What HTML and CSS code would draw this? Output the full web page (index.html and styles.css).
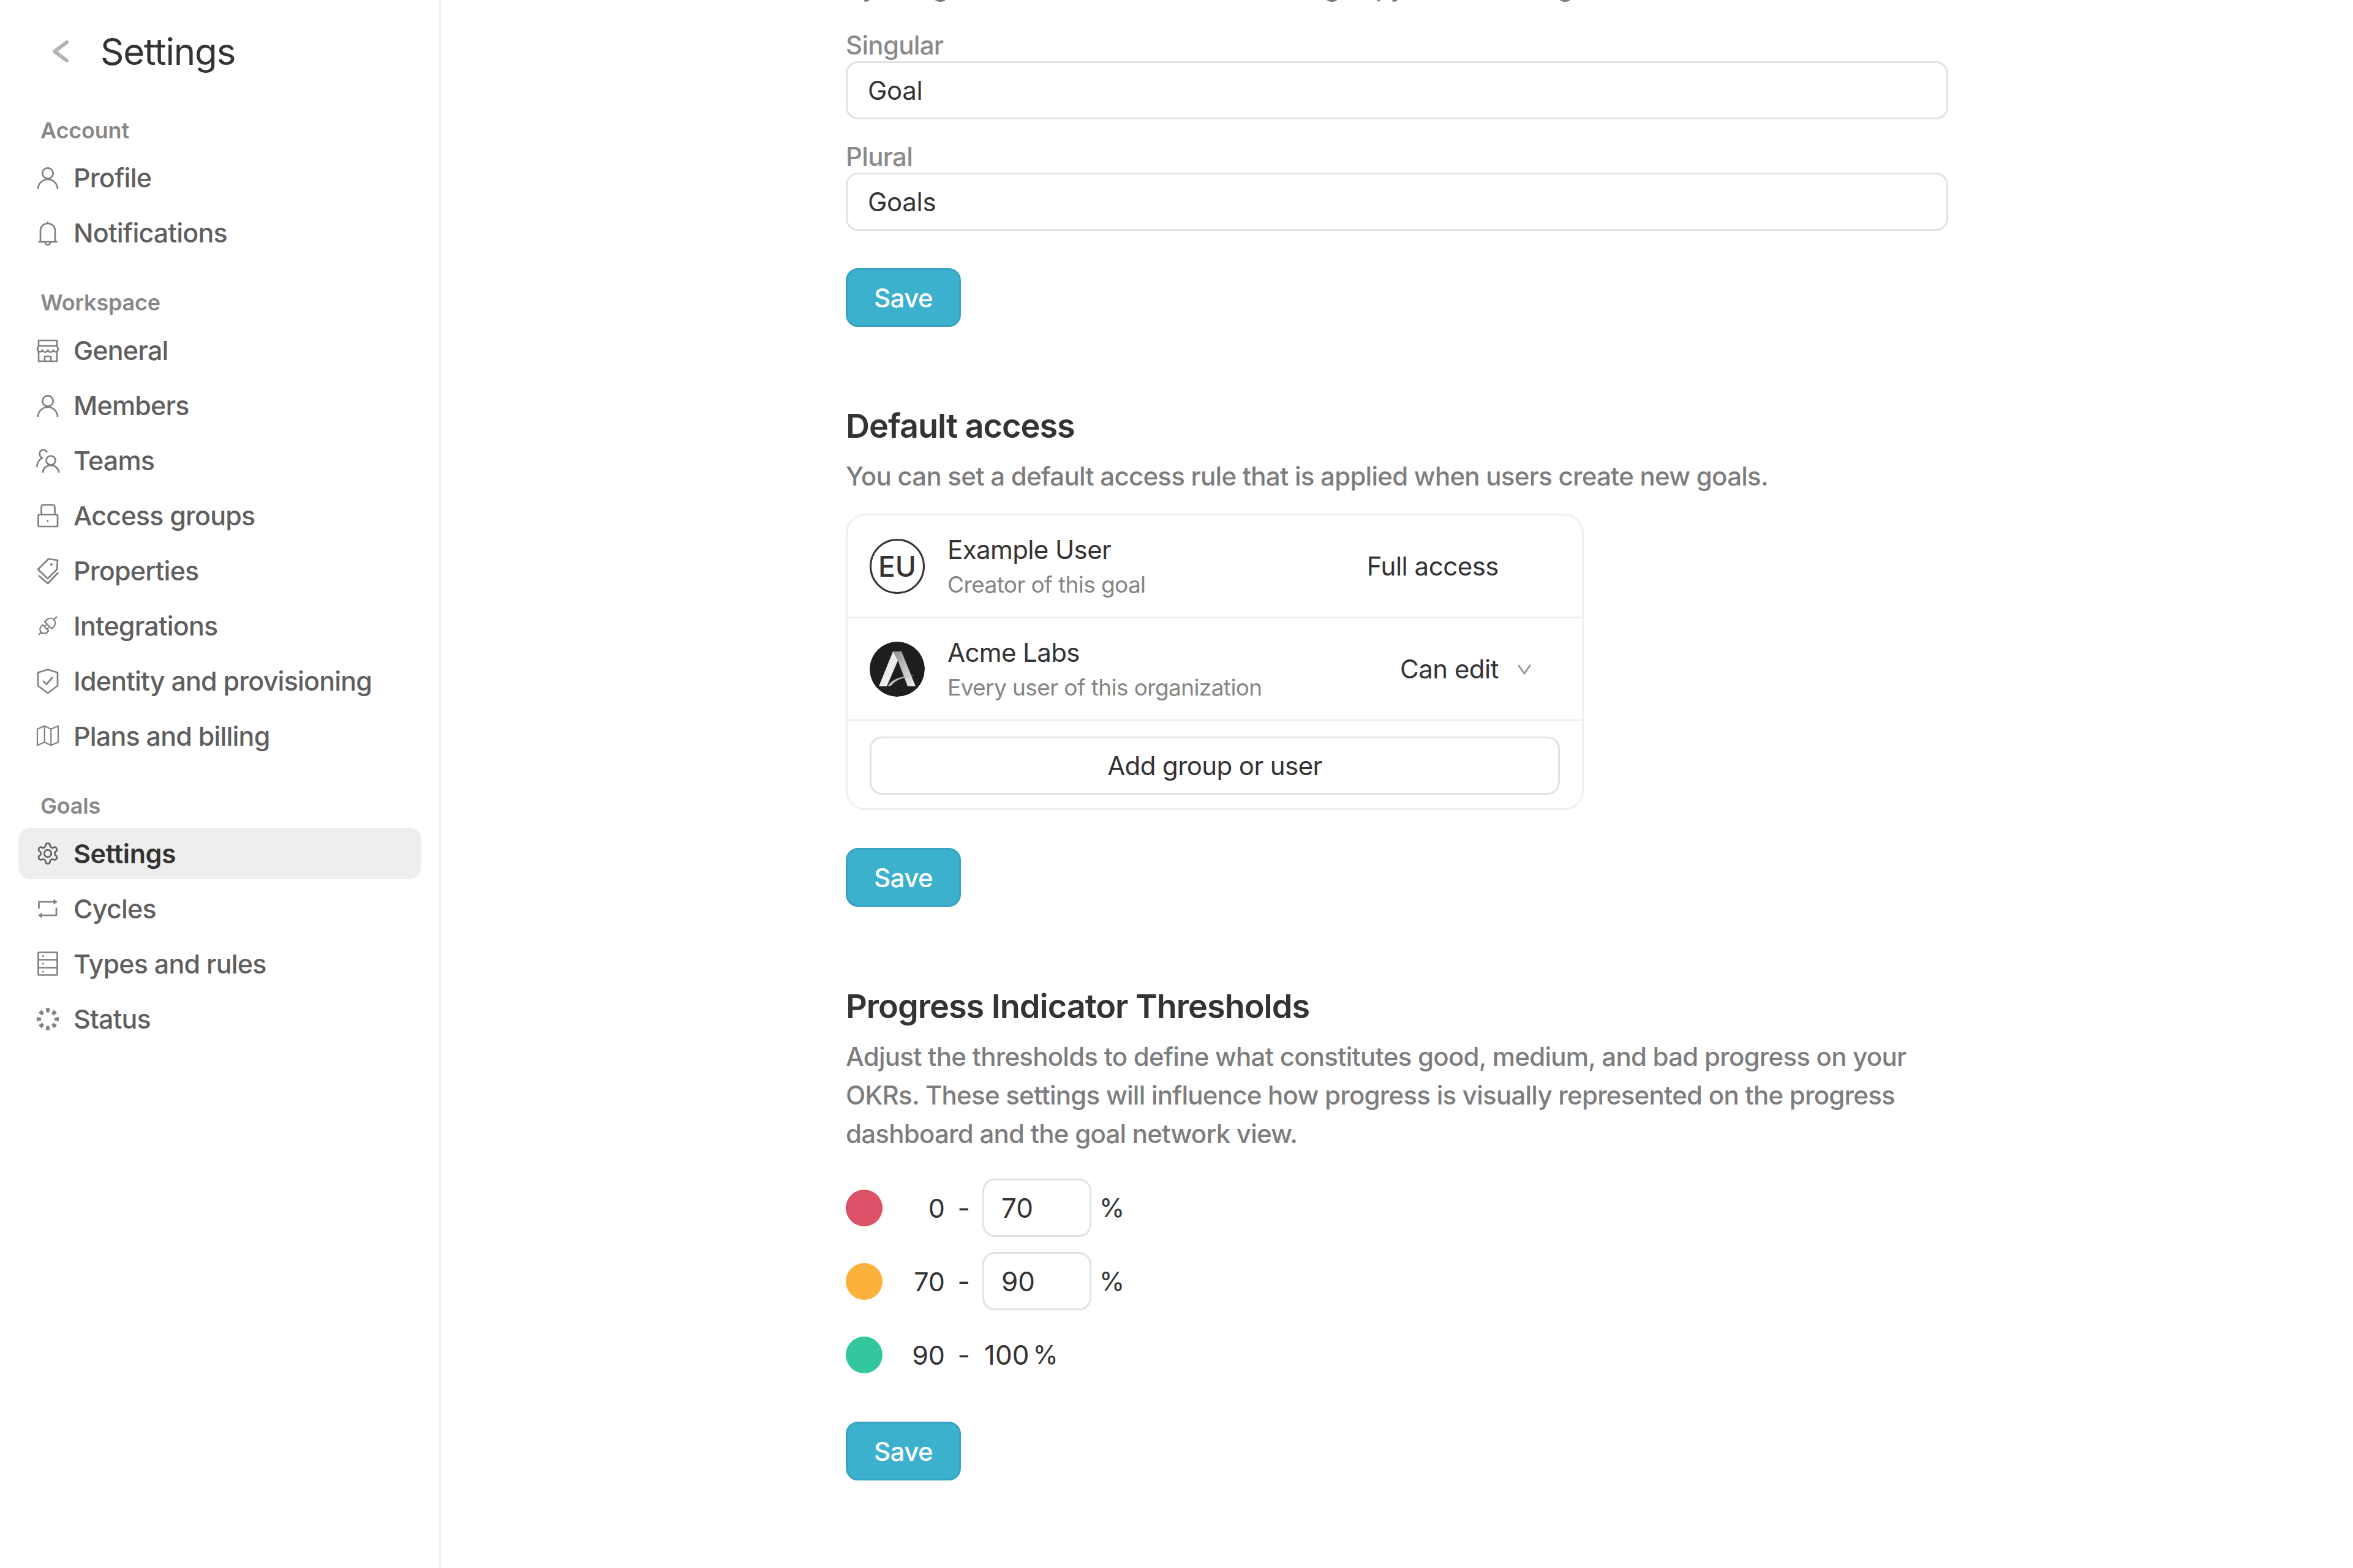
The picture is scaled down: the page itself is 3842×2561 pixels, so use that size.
FILE: index.html
```html
<!DOCTYPE html>
<html lang="en">
<head>
    <meta charset="UTF-8">
    <title>Settings</title>
    <link rel="stylesheet" href="styles.css">
</head>
<body>
    <aside class="sidebar">
        <div class="sidebar-title">
            <svg class="back-icon" viewBox="0 0 28 36"><polyline points="25,3 5,18 25,33"/></svg>
            <span>Settings</span>
        </div>

        <div class="nav-label nav-label-first">Account</div>
        <a class="nav-item">
            <svg class="nav-icon" viewBox="0 0 40 40"><circle cx="20" cy="13" r="8.7"/><path d="M4 39C4 30 11 23 20 23S36 30 36 39"/></svg>
            Profile
        </a>
        <a class="nav-item">
            <svg class="nav-icon" viewBox="0 0 40 40"><path d="M8 35V17C8 10 13 5 20 5S32 10 32 17V35M4.5 35H35.500M16 36A4 4 0 0 0 24 36M20 1.700V5"/></svg>
            Notifications
        </a>

        <div class="nav-label">Workspace</div>
        <a class="nav-item">
            <svg class="nav-icon" viewBox="0 0 40 40"><path d="M5 13V4H35V13M5 13H35L37 18C37 23 31 24 29 20C27 24 22 24 20 20C18 24 13 24 11 20C9 24 3 23 3 18ZM5 22V38H35V22M15 38V30H25V38"/></svg>
            General
        </a>
        <a class="nav-item">
            <svg class="nav-icon" viewBox="0 0 40 40"><circle cx="20" cy="13" r="8.7"/><path d="M4 39C4 30 11 23 20 23S36 30 36 39"/></svg>
            Members
        </a>
        <a class="nav-item">
            <svg class="nav-icon" viewBox="0 0 40 40"><circle cx="25" cy="20" r="7.500"/><path d="M12 40C12 33 18 28 25 28S38 33 38 40M19 7C17 2 9 1 7 7C6 11 8 15 11 16C6 18 3 24 2 31"/></svg>
            Teams
        </a>
        <a class="nav-item">
            <svg class="nav-icon" viewBox="0 0 40 40"><rect x="4.500" y="18.500" width="31.500" height="19.500" rx="1"/><path d="M9.500 18.500V7C9.500 4 11.500 2.500 14 2.500H27C29.500 2.500 31.500 4 31.500 7V18.500"/><path class="nav-icon-thin" d="M20 27V31"/></svg>
            Access groups
        </a>
        <a class="nav-item">
            <svg class="nav-icon" viewBox="0 0 40 40"><path d="M4 18L21 1L36 3L35 18L20 33ZM5 28L20 41L37 23"/><circle class="nav-icon-dot" cx="26" cy="10" r="2"/></svg>
            Properties
        </a>
        <a class="nav-item">
            <svg class="nav-icon nav-icon-plug" viewBox="0 0 40 40"><g transform="rotate(-45 20 20)"><path d="M-1 20H5M15 13V27H12A7 7 0 0 1 12 13ZM15 17H19.500M15 23H19.500M21 12H26A8 8 0 0 1 26 28H21ZM34 20H41"/></g></svg>
            Integrations
        </a>
        <a class="nav-item">
            <svg class="nav-icon" viewBox="0 0 40 40"><path d="M20 1.500L36 6.500V28L20 40L4 28V6.500ZM12 20L18 25.500L28 14"/></svg>
            Identity and provisioning
        </a>
        <a class="nav-item">
            <svg class="nav-icon nav-icon-map" viewBox="0 0 40 40"><path d="M3 8.700L14.700 3.700L25.300 8.700L37 3.700V30.300L25.300 35.300L14.700 30.300L3 35.300ZM14.700 3.700V30.300M25.300 8.700V35.300"/></svg>
            Plans and billing
        </a>

        <div class="nav-label">Goals</div>
        <a class="nav-item nav-item-active">
            <svg class="nav-icon nav-icon-gear" viewBox="0 0 24 24"><path d="M12.220 2h-.44a2 2 0 0 0-2 2v.18a2 2 0 0 1-1 1.730l-.43.25a2 2 0 0 1-2 0l-.15-.08a2 2 0 0 0-2.730.73l-.22.38a2 2 0 0 0 .73 2.730l.15.1a2 2 0 0 1 1 1.720v.51a2 2 0 0 1-1 1.740l-.15.09a2 2 0 0 0-.73 2.730l.22.38a2 2 0 0 0 2.730.73l.15-.08a2 2 0 0 1 2 0l.43.25a2 2 0 0 1 1 1.730V20a2 2 0 0 0 2 2h.44a2 2 0 0 0 2-2v-.18a2 2 0 0 1 1-1.730l.43-.25a2 2 0 0 1 2 0l.15.08a2 2 0 0 0 2.730-.73l.22-.39a2 2 0 0 0-.73-2.730l-.15-.08a2 2 0 0 1-1-1.740v-.5a2 2 0 0 1 1-1.740l.15-.09a2 2 0 0 0 .73-2.730l-.22-.38a2 2 0 0 0-2.730-.73l-.15.08a2 2 0 0 1-2 0l-.43-.25a2 2 0 0 1-1-1.730V4a2 2 0 0 0-2-2z"/><circle cx="12" cy="12" r="3.500"/></svg>
            Settings
        </a>
        <a class="nav-item">
            <svg class="nav-icon" viewBox="0 0 40 40"><path d="M5.500 20V9H31M34 18.500V31H9"/><path class="nav-icon-fill" d="M29.500 4.500L36 9L29.500 13.500ZM10.500 26.500L4 31L10.500 35.500Z"/></svg>
            Cycles
        </a>
        <a class="nav-item">
            <svg class="nav-icon" viewBox="0 0 40 40"><rect x="4.500" y="1.500" width="31" height="37" rx="1"/><path d="M4.500 13.500H35.500M4.500 26.500H35.500"/><circle class="nav-icon-dot" cx="12" cy="7.500" r="1.600"/><circle class="nav-icon-dot" cx="12" cy="20" r="1.600"/><circle class="nav-icon-dot" cx="12" cy="33" r="1.600"/></svg>
            Types and rules
        </a>
        <a class="nav-item">
            <svg class="nav-icon nav-icon-status" viewBox="0 0 40 40"><circle cx="20" cy="20.500" r="14.500" pathLength="80" stroke-dasharray="5 5" stroke-dashoffset="2.500"/></svg>
            Status
        </a>
    </aside>

    <main class="main">
        <div class="content">
            <p class="text">By using these terms we will alter existing copy across both goal forms.</p>

            <div class="field">
                <label class="field-label">Singular</label>
                <input class="text-input" type="text" value="Goal">
            </div>
            <div class="field field-next">
                <label class="field-label">Plural</label>
                <input class="text-input" type="text" value="Goals">
            </div>
            <button class="save-button save-first">Save</button>

            <h2 class="section-title section-access">Default access</h2>
            <p class="text section-text">You can set a default access rule that is applied when users create new goals.</p>

            <div class="access-card">
                <div class="access-row">
                    <div class="avatar avatar-initials">EU</div>
                    <div class="access-who">
                        <div class="access-name">Example User</div>
                        <div class="access-sub">Creator of this goal</div>
                    </div>
                    <div class="access-level">Full access</div>
                    <div class="access-caret"></div>
                </div>
                <div class="access-row">
                    <svg class="avatar" viewBox="0 0 90 90">
                        <defs>
                            <linearGradient id="legGrad" x1="0" y1="0" x2="1" y2="1">
                                <stop offset="0" stop-color="#8f8f8f"/>
                                <stop offset="1" stop-color="#f2f2f2"/>
                            </linearGradient>
                        </defs>
                        <circle cx="45" cy="45" r="45" fill="#1f1d1e"/>
                        <polygon points="38,16 52,16 46,31 28,73 15,73" fill="#ececec"/>
                        <polygon points="38,16 52,16 75,73 62,73 46,31" fill="url(#legGrad)"/>
                        <path d="M30 72C36 62 50 56 74 55C58 57 42 62 34 73Z" fill="#b8b8b8"/>
                    </svg>
                    <div class="access-who">
                        <div class="access-name">Acme Labs</div>
                        <div class="access-sub">Every user of this organization</div>
                    </div>
                    <div class="access-level">Can edit</div>
                    <div class="access-caret">
                        <svg class="caret-icon" viewBox="0 0 20 16"><polyline points="0,1 10,15 20,1"/></svg>
                    </div>
                </div>
                <div class="access-add">
                    <button class="add-button">Add group or user</button>
                </div>
            </div>
            <button class="save-button save-next">Save</button>

            <h2 class="section-title section-progress">Progress Indicator Thresholds</h2>
            <p class="text section-text">Adjust the thresholds to define what constitutes good, medium, and bad progress on your OKRs. These settings will influence how progress is visually represented on the progress dashboard and the goal network view.</p>

            <div class="thresholds">
                <div class="threshold-row">
                    <span class="dot dot-red"></span>
                    <span class="threshold-from">0</span>
                    <span class="threshold-dash">-</span>
                    <input class="threshold-input" type="text" value="70">
                    <span class="threshold-unit">%</span>
                </div>
                <div class="threshold-row">
                    <span class="dot dot-orange"></span>
                    <span class="threshold-from">70</span>
                    <span class="threshold-dash">-</span>
                    <input class="threshold-input" type="text" value="90">
                    <span class="threshold-unit">%</span>
                </div>
                <div class="threshold-row">
                    <span class="dot dot-green"></span>
                    <span class="threshold-from">90</span>
                    <span class="threshold-dash">-</span>
                    <span class="threshold-max">100</span>
                    <span class="threshold-unit threshold-max-unit">%</span>
                </div>
            </div>
            <button class="save-button save-next">Save</button>
        </div>
    </main>
</body>
</html>
```

FILE: styles.css
```css
* {
    box-sizing: border-box;
}
html, body {
    height: 100%;
}
body {
    margin: 0;
    display: flex;
    overflow: hidden;
    background: #fff;
    color: #333;
    font-family: Inter, "Noto Sans", sans-serif;
    font-size: 44px;
}

/* sidebar */
.sidebar {
    width: 720px;
    flex: none;
    height: 100%;
    padding-top: 42px;
    border-right: 3px solid #f0f0f0;
}
.sidebar-title {
    display: flex;
    align-items: center;
    height: 84px;
    padding-left: 84px;
    font-size: 60px;
    letter-spacing: -1.2px;
    color: #333;
}
.back-icon {
    width: 28px;
    height: 36px;
    margin-right: 52px;
    fill: none;
    stroke: #b4b4b4;
    stroke-width: 6;
    stroke-linecap: round;
    stroke-linejoin: round;
}
.nav-label {
    height: 50px;
    line-height: 50px;
    margin: 47px 0 11px 66px;
    font-size: 36px;
    font-weight: 600;
    letter-spacing: -0.2px;
    color: #888;
}
.nav-label-first {
    margin-top: 62px;
    margin-bottom: 10px;
}
.nav-item {
    display: flex;
    align-items: center;
    gap: 22px;
    width: 658px;
    height: 84px;
    margin: 0 0 6px 30px;
    padding-left: 28px;
    border-radius: 20px;
    font-size: 43px;
    font-weight: 450;
    letter-spacing: -0.8px;
    color: #5f5f5f;
}
.nav-item-active {
    background: #eeeeee;
    color: #333;
    font-weight: 600;
    letter-spacing: -0.4px;
}
.nav-icon {
    width: 40px;
    height: 40px;
    flex: none;
    overflow: visible;
    fill: none;
    stroke: #808080;
    stroke-width: 2.7;
    stroke-linejoin: round;
}
.nav-icon-thin {
    stroke-width: 2.2;
}
.nav-icon-dot {
    fill: #808080;
    stroke: none;
}
.nav-icon-fill {
    fill: #808080;
    stroke: none;
}
.nav-icon-plug,
.nav-icon-map {
    stroke-width: 2.2;
}
.nav-icon-gear {
    stroke: #606060;
    stroke-width: 1.6;
}
.nav-icon-status {
    stroke-width: 7;
}

/* main column */
.main {
    flex: 1;
    height: 100%;
}
.content {
    width: 1800px;
    margin: -53px auto 0;
}
.text {
    margin: 0;
    line-height: 63px;
    font-size: 42px;
    font-weight: 450;
    letter-spacing: -0.75px;
    color: #7d7d7d;
}
.field {
    margin-top: 39px;
}
.field-next {
    margin-top: 36px;
}
.field-label {
    display: block;
    height: 50px;
    line-height: 50px;
    margin-bottom: 1px;
    font-size: 42px;
    font-weight: 450;
    letter-spacing: -0.7px;
    color: #8a8a8a;
}
.text-input {
    display: block;
    width: 100%;
    height: 95px;
    padding: 0 33px;
    border: 3px solid #e2e2e2;
    border-radius: 20px;
    outline: none;
    background: #fff;
    color: #333;
    font-family: inherit;
    font-size: 42px;
    letter-spacing: -0.3px;
}
.save-button {
    display: block;
    width: 188px;
    height: 96px;
    padding: 0;
    border: 3px solid #35a3c1;
    border-radius: 20px;
    background: #3bb1ce;
    color: #fff;
    font-family: inherit;
    font-size: 42px;
    font-weight: 450;
    letter-spacing: -0.6px;
}
.save-first {
    margin-top: 61px;
}
.save-next {
    margin-top: 62px;
}
.section-title {
    margin: 0;
    height: 70px;
    line-height: 73px;
    font-size: 54px;
    font-weight: 600;
    letter-spacing: -1px;
    color: #333;
}
.section-access {
    margin-top: 125px;
}
.section-progress {
    margin-top: 126px;
}
.section-text {
    margin-top: 17px;
}

/* access card */
.access-card {
    width: 1205px;
    height: 484px;
    margin-top: 30px;
    border: 3px solid #f0f0f0;
    border-radius: 32px;
}
.access-row {
    display: flex;
    align-items: center;
    height: 168px;
    padding: 0 84px 0 36px;
    border-bottom: 3px solid #f0f0f0;
}
.avatar {
    width: 90px;
    height: 90px;
    flex: none;
    border-radius: 50%;
}
.avatar-initials {
    display: flex;
    align-items: center;
    justify-content: center;
    border: 3px solid #333;
    font-size: 46px;
    font-weight: 500;
}
.access-who {
    flex: 1;
    margin-left: 37px;
}
.access-name {
    line-height: 60px;
    font-size: 42px;
    letter-spacing: -0.6px;
    color: #333;
}
.access-sub {
    line-height: 54px;
    font-size: 37px;
    letter-spacing: -0.6px;
    color: #858585;
}
.access-level {
    font-size: 42px;
    letter-spacing: -0.5px;
    color: #333;
}
.access-caret {
    display: flex;
    justify-content: flex-end;
    width: 52px;
}
.caret-icon {
    width: 20px;
    height: 16px;
    overflow: visible;
    fill: none;
    stroke: #999;
    stroke-width: 3;
}
.access-add {
    padding: 25px 36px 0;
}
.add-button {
    display: block;
    width: 100%;
    height: 95px;
    border: 3px solid #e2e2e2;
    border-radius: 20px;
    background: #fff;
    color: #333;
    font-family: inherit;
    font-size: 42px;
    letter-spacing: -0.6px;
}

/* thresholds */
.thresholds {
    display: flex;
    flex-direction: column;
    gap: 25px;
    margin-top: 42px;
}
.threshold-row {
    display: flex;
    align-items: center;
    height: 95px;
}
.dot {
    width: 60px;
    height: 60px;
    flex: none;
    border-radius: 50%;
}
.dot-red {
    background: #dc5068;
}
.dot-orange {
    background: #fbb13c;
}
.dot-green {
    background: #34c79d;
}
.threshold-from {
    width: 102px;
    font-size: 43px;
    text-align: right;
}
.threshold-dash {
    width: 61px;
    text-align: center;
}
.threshold-input {
    width: 178px;
    height: 95px;
    padding: 0 28px;
    border: 3px solid #e2e2e2;
    border-radius: 20px;
    outline: none;
    color: #333;
    font-family: inherit;
    font-size: 44px;
}
.threshold-unit {
    margin-left: 13px;
    font-size: 42px;
}
.threshold-max {
    margin-left: 3px;
}
.threshold-max-unit {
    margin-left: 6px;
}
```
